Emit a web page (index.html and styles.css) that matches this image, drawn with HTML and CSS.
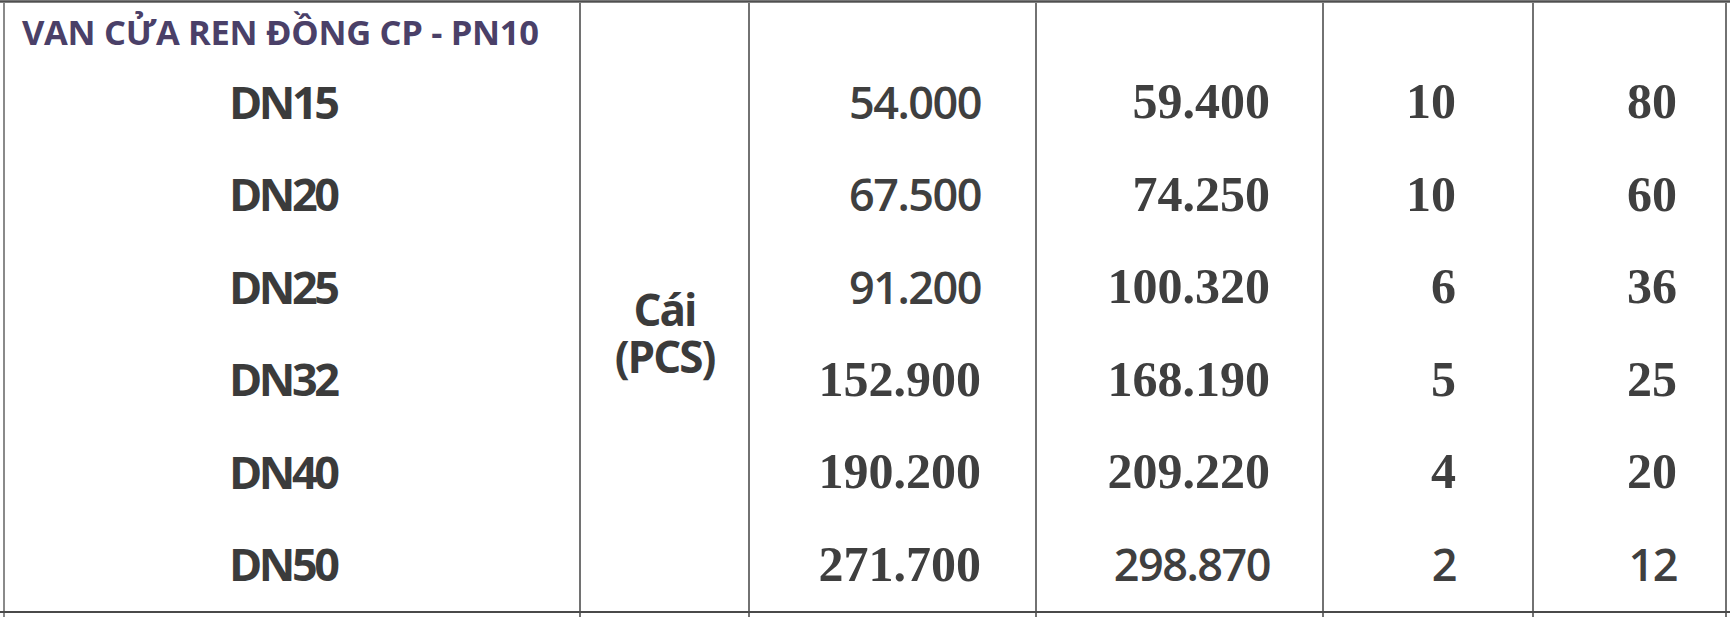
FILE: index.html
```html
<!DOCTYPE html>
<html lang="vi">
<head>
<meta charset="utf-8">
<title>Van cửa ren đồng CP - PN10</title>
<link rel="stylesheet" href="styles.css">
</head>
<body>
<div class="sheet">
  <div class="rule-top"></div>
  <div class="cols">
    <div class="col col-name">
      <div class="head"><span class="title">VAN CỬA REN ĐỒNG CP - PN10</span></div>
      <div class="cell">DN15</div>
      <div class="cell">DN20</div>
      <div class="cell">DN25</div>
      <div class="cell">DN32</div>
      <div class="cell">DN40</div>
      <div class="cell">DN50</div>
    </div>
    <div class="col col-unit">
      <div class="head"></div>
      <div class="unit"><p class="unit-text">Cái<br>(PCS)</p></div>
    </div>
    <div class="col col-num col-p1">
      <div class="head"></div>
      <div class="cell alt">54.000</div>
      <div class="cell alt">67.500</div>
      <div class="cell alt">91.200</div>
      <div class="cell">152.900</div>
      <div class="cell">190.200</div>
      <div class="cell">271.700</div>
    </div>
    <div class="col col-num col-p2">
      <div class="head"></div>
      <div class="cell">59.400</div>
      <div class="cell">74.250</div>
      <div class="cell">100.320</div>
      <div class="cell">168.190</div>
      <div class="cell">209.220</div>
      <div class="cell alt">298.870</div>
    </div>
    <div class="col col-num col-q1">
      <div class="head"></div>
      <div class="cell">10</div>
      <div class="cell">10</div>
      <div class="cell">6</div>
      <div class="cell">5</div>
      <div class="cell">4</div>
      <div class="cell alt">2</div>
    </div>
    <div class="col col-num col-q2">
      <div class="head"></div>
      <div class="cell">80</div>
      <div class="cell">60</div>
      <div class="cell">36</div>
      <div class="cell">25</div>
      <div class="cell">20</div>
      <div class="cell alt">12</div>
    </div>
  </div>
  <div class="rule-bottom"></div>
  <div class="cols stub">
    <div class="col col-name"></div>
    <div class="col col-unit"></div>
    <div class="col col-num"></div>
    <div class="col col-num"></div>
    <div class="col col-num"></div>
    <div class="col col-num last"></div>
  </div>
</div>
</body>
</html>
```

FILE: styles.css
```css
html, body {
  margin: 0;
  padding: 0;
  background: #ffffff;
}

.sheet {
  width: 1730px;
  height: 617px;
  overflow: hidden;
  display: flex;
  flex-direction: column;
  color: #3e3e3e;
}

.rule-top {
  height: 3px;
  background: linear-gradient(#8a8a8a, #4f4f4f 50%, #9a9a9a);
  flex: none;
}

.rule-bottom {
  height: 2px;
  background: #4a4a4a;
  flex: none;
}

.cols {
  display: grid;
  grid-template-columns: 576px 169px 287px 287px 210px 195px;
  margin-left: 3px;
  height: 608px;
  flex: none;
}

.cols.stub {
  height: 10px;
}

.col {
  border-left: 2px solid #727272;
  display: flex;
  flex-direction: column;
  min-width: 0;
}

.col-name {
  border-left-color: #8a8a8a;
}

.col-q2 {
  border-right: 2px solid #727272;
}

.stub .last {
  border-right: 2px solid #727272;
}

.head {
  height: 52px;
  flex: none;
  display: flex;
  align-items: center;
  padding-top: 4px;
  box-sizing: border-box;
}

.title {
  padding-left: 17px;
  font-family: "Open Sans", "Noto Sans", sans-serif;
  font-weight: 700;
  font-size: 34.5px;
  letter-spacing: -0.3px;
  color: #4a4068;
  white-space: nowrap;
}

.cell {
  height: 92.5px;
  flex: none;
  display: flex;
  align-items: center;
  white-space: nowrap;
}

.col-name .cell {
  padding-left: 224px;
  font-family: "Open Sans", "Noto Sans", sans-serif;
  font-weight: 700;
  font-size: 45px;
  letter-spacing: -3.5px;
  color: #3b3b3b;
}

.col-unit {
  align-items: center;
}

.unit {
  flex: 1;
  display: flex;
  flex-direction: column;
  align-items: center;
  justify-content: center;
}

.unit-text {
  margin: 0;
  text-align: center;
  font-family: "Open Sans", "Noto Sans", sans-serif;
  font-weight: 700;
  font-size: 44px;
  line-height: 47px;
  letter-spacing: -2px;
  color: #3b3b3b;
}

.col-num .cell {
  justify-content: flex-end;
  font-family: "Liberation Serif", "Times New Roman", serif;
  font-weight: 700;
  font-size: 50px;
  color: #3f3f3f;
}

.col-num .cell.alt {
  font-family: "Open Sans", "Noto Sans", sans-serif;
  font-weight: 600;
  font-size: 45px;
  letter-spacing: -1.5px;
}

.col-p1 .cell { padding-right: 54px; }
.col-p2 .cell { padding-right: 52px; }
.col-q1 .cell { padding-right: 76px; }
.col-q2 .cell { padding-right: 48px; }
```
